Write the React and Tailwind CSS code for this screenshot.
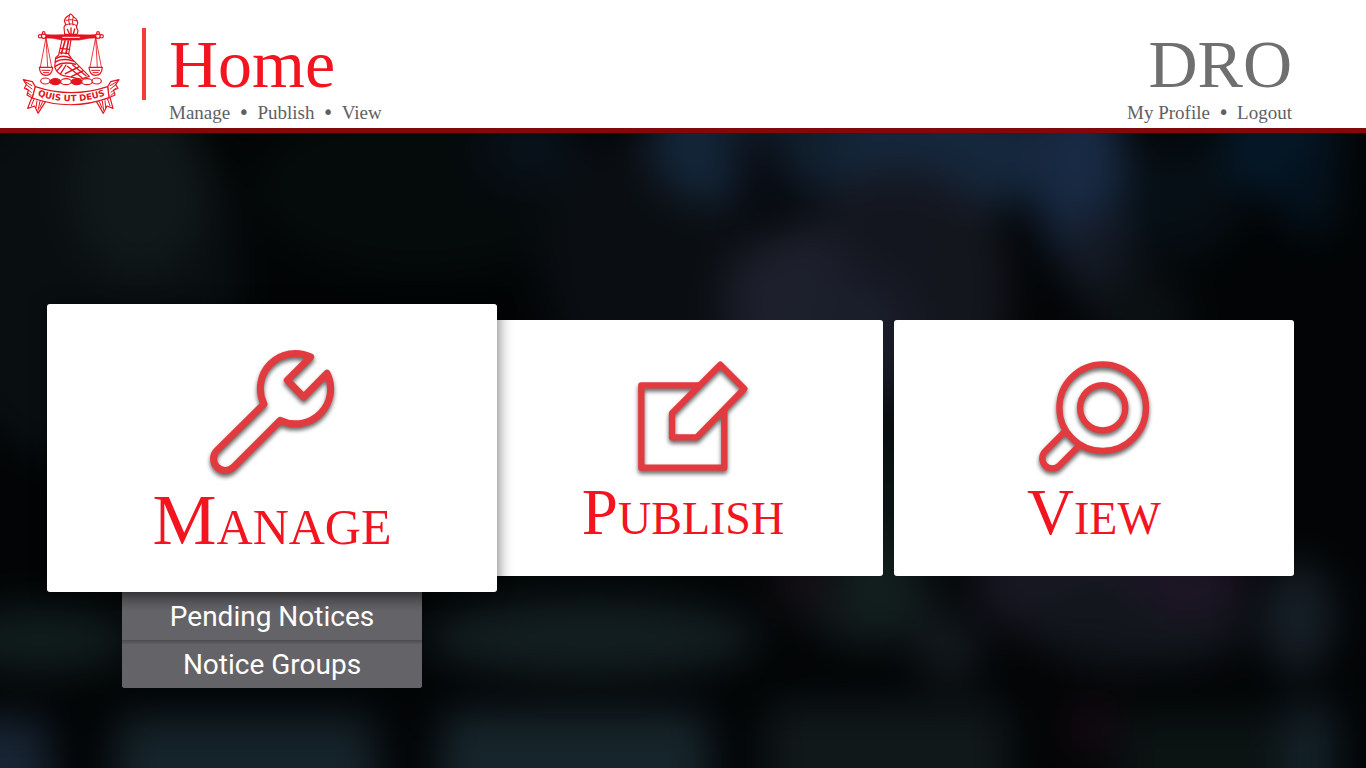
import React from "react";

const BLOBS = [
  [90, 150, 150, 190, "#090f11"],
  [140, 60, 70, 90, "#101819"],
  [420, 60, 170, 90, "#050a0b"],
  [530, 20, 50, 40, "#08111a"],
  [650, 130, 110, 130, "#0a0e12"],
  [712, 14, 62, 60, "#14263a"],
  [870, 10, 160, 60, "#101e2c"],
  [950, 24, 120, 60, "#15273c"],
  [1082, 50, 46, 95, "#182a44"],
  [1100, 130, 36, 50, "#141a26"],
  [1180, 70, 60, 60, "#060f15"],
  [1280, 16, 60, 55, "#051828"],
  [1310, 60, 30, 50, "#04121e"],
  [900, 160, 110, 120, "#14161f"],
  [790, 175, 65, 80, "#1d1f2c"],
  [860, 200, 50, 50, "#1a1e2b"],
  [970, 160, 40, 90, "#14161e"],
  [760, 60, 22, 60, "#07090f"],
  [1140, 190, 50, 50, "#0b1012"],
  [888, 400, 16, 120, "#12201f"],
  [40, 512, 95, 34, "#101c1c"],
  [592, 510, 170, 40, "#121e20"],
  [870, 470, 70, 50, "#111a1c"],
  [875, 455, 26, 50, "#11201d"],
  [805, 455, 36, 30, "#141016"],
  [1080, 455, 110, 60, "#171722"],
  [1140, 500, 110, 40, "#12161c"],
  [1190, 455, 60, 34, "#1d1526"],
  [950, 522, 34, 34, "#13191e"],
  [1298, 490, 36, 56, "#161f27"],
  [1092, 600, 28, 30, "#140a12"],
];

const TILES = [
  [-60, 590, 110, 110, "#172433"],
  [115, 588, 262, 110, "#15232a"],
  [440, 584, 270, 110, "#16252b"],
  [765, 575, 245, 120, "#10181a"],
  [1120, 585, 215, 110, "#0b1313"],
  [1285, 575, 50, 120, "#14222a"],
];

function Backdrop() {
  return (
    <svg
      className="absolute inset-0 h-full w-full"
      viewBox="0 0 1366 640"
      preserveAspectRatio="none"
      aria-hidden="true"
    >
      <defs>
        <filter
          id="soft"
          filterUnits="userSpaceOnUse"
          x="-100"
          y="-100"
          width="1566"
          height="840"
          colorInterpolationFilters="sRGB"
        >
          <feGaussianBlur stdDeviation="20" />
        </filter>
      </defs>
      <rect width="1366" height="640" fill="#020405" />
      <g filter="url(#soft)">
        <rect x="-100" y="-100" width="1566" height="840" fill="#020405" />
        {BLOBS.map(([cx, cy, rx, ry, fill]) => (
          <ellipse key={`${cx}-${cy}`} cx={cx} cy={cy} rx={rx} ry={ry} fill={fill} />
        ))}
        {TILES.map(([x, y, width, height, fill]) => (
          <rect key={x} x={x} y={y} width={width} height={height} rx="16" fill={fill} />
        ))}
      </g>
    </svg>
  );
}

function Pan({ x }) {
  return (
    <g>
      <path d={`M${x} 98 L${x - 17} 186 M${x} 98 L${x + 17} 186 M${x} 98 L${x + 5} 186`} strokeWidth="2.5" />
      <path d={`M${x - 20} 187 H${x + 20} Q${x + 18} 211 ${x} 211 Q${x - 18} 211 ${x - 20} 187Z`} fill="#fff" strokeWidth="3.5" />
      <path d={`M${x - 12} 196 H${x + 12} M${x - 8} 203 H${x + 8}`} strokeWidth="3" />
    </g>
  );
}

function Crest() {
  return (
    <svg className="h-[120px] w-[120px] shrink-0" viewBox="0 0 360 360" role="img" aria-label="Quis ut Deus crest">
      <g fill="none" stroke="#e3141f" strokeWidth="3.5" strokeLinejoin="round" strokeLinecap="round">
        <path d="M156 104 L146 150 L137 158 L134 186 Q142 207 160 212 L213 222 L238 214 L184 160 L176 148 L183 104Z" fill="#fff" />
        <path d="M165 108 L154 146 M175 108 L168 146" strokeWidth="5" />
        <path d="M151 130 L179 133 M148 143 L176 146" />
        <path d="M139 160 Q160 148 182 160 M136 171 Q156 158 190 168 M136 184 Q158 168 196 178" strokeWidth="4.5" />
        <path d="M142 196 L156 180 M152 206 L168 180" strokeWidth="4" />
        <path d="M166 206 L206 186 M184 215 L218 198" strokeWidth="4.5" />
        <path d="M172 184 L216 218 M188 180 L228 212" strokeWidth="4" />
        <path d="M164 88 L162 66 L167 58 L163 48 Q166 35 178 31 Q180 25 185 29 L190 35 Q203 42 203 55 L199 65 L204 78 L201 88Z" fill="#fff" />
        <path d="M178 31 Q173 47 179 60 M190 35 Q184 47 189 60 M168 46 Q184 40 202 48 M166 60 Q184 52 201 62" strokeWidth="3" />
        <path d="M172 73 L178 86 M183 69 L183 88 M194 72 L190 87" strokeWidth="4" />
        <path d="M96 88 Q122 91 157 89 H208 Q242 91 270 88 V98 Q236 98 208 105 H157 Q130 98 96 98Z" fill="#e3141f" strokeWidth="2" />
        <path d="M158 97 H208" stroke="#fff" strokeWidth="3" />
        <circle cx="101" cy="93" r="7" fill="#fff" />
        <circle cx="90" cy="94" r="5" fill="#fff" />
        <circle cx="101" cy="84" r="4" fill="#fff" />
        <circle cx="264" cy="93" r="7" fill="#fff" />
        <circle cx="275" cy="94" r="5" fill="#fff" />
        <circle cx="264" cy="84" r="4" fill="#fff" />
        <Pan x={108} />
        <Pan x={257} />
        {[106, 136, 168, 200, 231, 260].map((cx, i) => (
          <ellipse key={cx} cx={cx} cy={i === 0 || i === 5 ? 228 : 230} rx={i === 0 || i === 5 ? 14 : 16} ry="9" fill={[1, 3].includes(i) ? "#e3141f" : "#fff"} />
        ))}
        <path d="M66 277 L53 310 L74 303 L84 325 L107 289Z" fill="#fff" />
        <path d="M300 277 L309 310 L291 303 L280 325 L259 289Z" fill="#fff" />
        <path d="M72 283 L64 302 M81 287 L78 308 M90 289 L84 316 M98 290 L89 309" strokeWidth="3" />
        <path d="M293 283 L300 302 M285 287 L287 308 M277 289 L281 316 M268 290 L276 309" strokeWidth="3" />
        <path d="M40 224 L67 230 L76 245 L67 279 L51 270 L55 256 L43 250 L49 239Z" fill="#fff" />
        <path d="M327 224 L302 230 L293 245 L297 278 L315 270 L311 256 L324 250 L317 239Z" fill="#fff" />
        <path d="M47 231 L66 242 M50 240 L66 252 M49 250 L64 262 M54 264 L64 272 M319 231 L300 242 M316 240 L301 252 M317 250 L303 262 M311 264 L302 272" strokeWidth="3" />
        <path d="M76 245 Q183 281 293 245 L297 278 Q184 320 67 279Z" fill="#fff" />
      </g>
      <path id="motto" d="M68 266 Q184 312 300 266" fill="none" />
      <text className="font-['DejaVu_Sans'] text-[26px] font-bold" fill="#e3141f" textAnchor="middle">
        <textPath href="#motto" startOffset="50%">QUIS UT DEUS</textPath>
      </text>
    </svg>
  );
}

function WrenchIcon() {
  return (
    <path d="M110.7 17 L87.3 40.3 L103.7 57 L127 33.3 A35 35 0 0 1 80.3 80.3 L33.6 127 A11.7 11.7 0 0 1 17 110.4 L64 64 A35 35 0 0 1 110.7 17Z" strokeWidth="7" />
  );
}

function ComposeIcon() {
  return (
    <g strokeWidth="6.3">
      <path d="M81 33.3 H22.3 V115.7 H105.3 V58" />
      <path d="M101.3 12.7 L125.3 36.7 L78 85.3 H53 V61.3Z" />
    </g>
  );
}

function MagnifierIcon() {
  return (
    <g strokeWidth="6.3">
      <circle cx="72.7" cy="55.7" r="43.3" />
      <circle cx="72.7" cy="55.7" r="22.6" />
      <path d="M34.3 80.1 L15.2 99.2 A10 10 0 0 0 29.4 113.4 L49.5 93.3" />
    </g>
  );
}

const iconClass = "overflow-visible fill-none stroke-[#e13a3f] drop-shadow-[0_3px_2px_rgba(0,0,0,0.6)]";

function Card({ title, children }) {
  return (
    <li className="min-w-0 flex-1">
      <button type="button" className="flex w-full flex-col items-center rounded-[3px] bg-white pt-8 pb-8">
        <svg className={`h-32 w-32 ${iconClass}`} viewBox="0 0 128 128" strokeLinejoin="round" strokeLinecap="butt" aria-hidden="true">
          {children}
        </svg>
        <span className="text-[65px] leading-[64px] text-[#f2141f] [font-variant-caps:small-caps]">{title}</span>
      </button>
    </li>
  );
}

function NavLinks({ links, label }) {
  return (
    <nav aria-label={label}>
      <ul className="flex items-baseline gap-2 text-[19px] leading-6 text-[#5f6064]">
        {links.map((link, i) => (
          <React.Fragment key={link}>
            {i > 0 && (
              <li className="font-['DejaVu_Sans',sans-serif]" aria-hidden="true">
                •
              </li>
            )}
            <li>
              <a href="#">{link}</a>
            </li>
          </React.Fragment>
        ))}
      </ul>
    </nav>
  );
}

export default function App() {
  return (
    <div className="flex min-h-screen flex-col bg-[#020405] font-['Liberation_Serif',serif]">
      <header className="flex h-32 items-start justify-between bg-white pr-[74px] pl-[10px]">
        <div className="flex">
          <div className="pt-[5px]">
            <Crest />
          </div>
          <div className="mt-7 ml-3 h-[72px] w-1 bg-[#f53b38]" />
          <div className="ml-[23px] pt-7">
            <h1 className="text-[68px] leading-[72px] text-[#f2141f]">Home</h1>
            <NavLinks label="Sections" links={["Manage", "Publish", "View"]} />
          </div>
        </div>
        <div className="flex flex-col items-end pt-7">
          <p className="text-[68px] leading-[72px] text-[#6f6f6f]">DRO</p>
          <NavLinks label="Account" links={["My Profile", "Logout"]} />
        </div>
      </header>

      <main className="relative flex flex-1 items-center justify-center px-[72px]">
        <Backdrop />
        <div className="absolute inset-x-0 top-0 h-[5px] bg-[#83070b]" />
        <ul className="relative flex w-full max-w-[1222px] items-center gap-[11px]">
          <li className="relative z-10 min-w-0 flex-1">
            <div className="relative z-10 -mx-[25px]">
              <button
                type="button"
                aria-expanded="true"
                className="flex w-full flex-col items-center rounded-[3px] bg-white pt-9 pb-9 shadow-[0_0_16px_rgba(0,0,0,0.6)]"
              >
                <svg className={`h-36 w-36 ${iconClass}`} viewBox="0 0 144 144" strokeLinejoin="round" aria-hidden="true">
                  <WrenchIcon />
                </svg>
                <span className="text-[72px] leading-[72px] text-[#f2141f] [font-variant-caps:small-caps]">Manage</span>
              </button>
            </div>
            <ul className="absolute inset-x-[50px] top-full overflow-hidden rounded-b-[3px] bg-[#646367] text-center font-[Roboto,sans-serif] text-[28px] leading-[46px] text-white">
              <li className="bg-linear-to-b from-[#4c4b4f] to-[#646367] to-40%">
                <a href="#" className="block pt-[2px]">Pending Notices</a>
              </li>
              <li className="bg-linear-to-b from-[#4c4b4f] to-[#646367] to-10%">
                <a href="#" className="block pt-[2px]">Notice Groups</a>
              </li>
            </ul>
          </li>
          <Card title="Publish">
            <ComposeIcon />
          </Card>
          <Card title="View">
            <MagnifierIcon />
          </Card>
        </ul>
      </main>
    </div>
  );
}
